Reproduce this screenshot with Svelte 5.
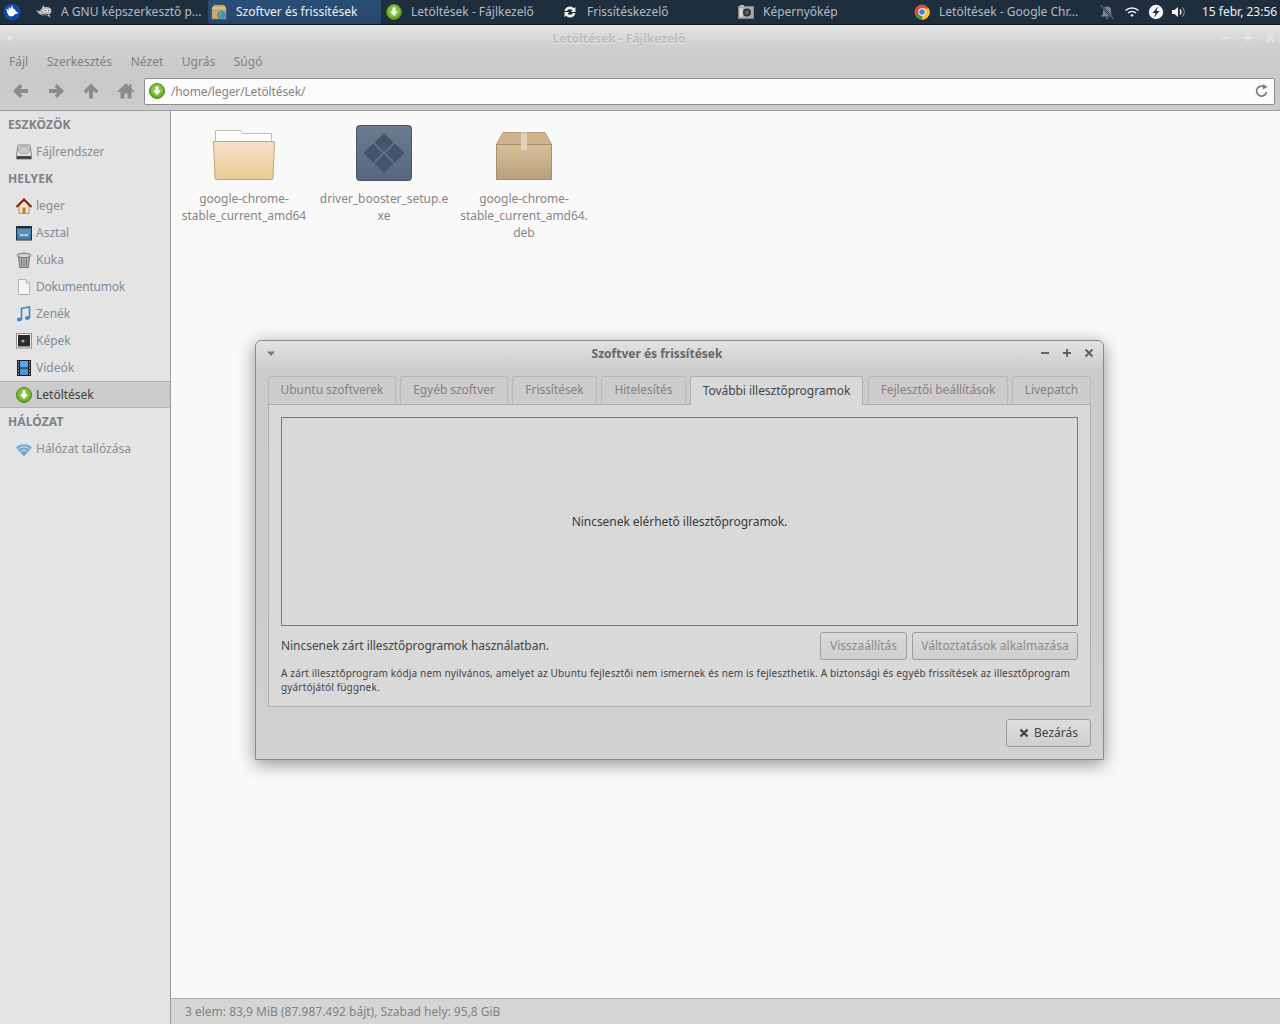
<script>
  const places = [
    { label: 'leger', icon: 'home' },
    { label: 'Asztal', icon: 'desktop' },
    { label: 'Kuka', icon: 'trash' },
    { label: 'Dokumentumok', icon: 'doc', tight: true },
    { label: 'Zenék', icon: 'music' },
    { label: 'Képek', icon: 'pic' },
    { label: 'Videók', icon: 'video' },
    { label: 'Letöltések', icon: 'down', selected: true }
  ];
  const tabs = [
    { label: 'Ubuntu szoftverek', w: 128 },
    { label: 'Egyéb szoftver', w: 108 },
    { label: 'Frissítések', w: 85 },
    { label: 'Hitelesítés', w: 85 },
    { label: 'További illesztőprogramok', w: 173, on: true },
    { label: 'Fejlesztői beállítások', w: 140 },
    { label: 'Livepatch', w: 79 }
  ];
  const menus = ['Fájl', 'Szerkesztés', 'Nézet', 'Ugrás', 'Súgó'];
</script>

{#snippet down()}
  <svg class="i16" viewBox="0 0 16 16">
    <circle cx="8" cy="8" r="7.5" fill="#6aa82c" stroke="#4f8a1c" />
    <circle cx="8" cy="7" r="6" fill="#84c23c" />
    <path d="M6.4 3.5h3.2v4h2.4L8 12 4 7.5h2.4z" fill="#fff" />
  </svg>
{/snippet}

{#snippet sideIcon(kind)}
  <svg class="i16" viewBox="0 0 16 16">
    {#if kind === 'disk'}
      <path d="M2 1h12l1.500 9.500v4.500H.5v-4.500z" fill="#dcdcdc" stroke="#8a8a8a" />
      <ellipse cx="8" cy="6" rx="5.500" ry="3.600" fill="#c8c8c8" stroke="#a4a4a4" />
      <rect x="1" y="12" width="14" height="3" fill="#4a4a4a" />
    {:else if kind === 'home'}
      <path d="M3 8v7.500h10V8L8 3z" fill="#f3e3c3" stroke="#b89a6a" />
      <rect x="6.500" y="9.500" width="3" height="6" fill="#c9772a" />
      <path d="M.5 9 8 1.500 15.500 9" fill="none" stroke="#7a2a20" stroke-width="2" />
    {:else if kind === 'desktop'}
      <rect x="0" y="1" width="16" height="14.500" fill="#1f2c3a" />
      <rect x="1" y="3.500" width="14" height="11" fill="#5d8fb8" />
      <rect x="1" y="9" width="14" height="5.500" fill="#3f79a6" />
      <rect x="3.500" y="9" width="9" height="2.400" fill="#a4c3da" />
    {:else if kind === 'trash'}
      <path d="M2.500 4.500 3.800 15.500h8.400l1.300-11z" fill="#b8b8b8" stroke="#6e6e6e" />
      <path d="M5.500 6.500l.3 7.500M8 6.500v7.500M10.500 6.500l-.3 7.500" stroke="#6e6e6e" />
      <ellipse cx="8" cy="3.400" rx="6.800" ry="2.200" fill="#d6d6d6" stroke="#6e6e6e" />
    {:else if kind === 'doc'}
      <path d="M2.500.5h7.500l3.500 3.500v11.500h-11z" fill="#f5f5f5" stroke="#b5b5b5" />
      <path d="M10 .5v3.500h3.500" fill="#ddd" stroke="#b5b5b5" />
    {:else if kind === 'music'}
      <path d="M5.500 13.500V2.500l8-1.500v11" fill="none" stroke="#3f86c6" stroke-width="1.600" />
      <ellipse cx="3.400" cy="13.500" rx="2.400" ry="2" fill="#3f86c6" />
      <ellipse cx="11.400" cy="12" rx="2.400" ry="2" fill="#3f86c6" />
    {:else if kind === 'pic'}
      <rect x=".5" y=".5" width="15" height="14.500" fill="#f0f0f0" stroke="#8f8f8f" />
      <rect x="2" y="2" width="12" height="11.500" fill="#2b2b2b" />
      <circle cx="7" cy="8" r="1.600" fill="#a5a5a5" />
    {:else if kind === 'video'}
      <rect x="1" y="0" width="14" height="16" fill="#1c1c1c" />
      <rect x="4" y="1" width="8" height="6.500" fill="#5aa6ea" />
      <rect x="4" y="8.500" width="8" height="6.500" fill="#4a94dc" />
      <path d="M2 2h1M2 5h1M2 8h1M2 11h1M2 14h1M13 2h1M13 5h1M13 8h1M13 11h1M13 14h1" stroke="#fff" />
    {:else if kind === 'wifi'}
      <path d="M0 6.500a11.500 11.500 0 0 1 16 0L8 15.500z" fill="#6aa9d8" />
      <path d="M2.500 8a8 8 0 0 1 11 0M4.800 10.300a4.700 4.700 0 0 1 6.400 0" fill="none" stroke="#e4e4e4" stroke-width="1" />
    {/if}
  </svg>
{/snippet}

<div class="screen">
  <header class="panel">
    <div class="whisker">
      <svg class="i20" viewBox="0 0 20 20">
        <circle cx="10" cy="10" r="8.500" fill="#0f4ca8" />
        <path d="M4.500 6.500l2 1.500.5-3.500 1.500 2.500 1.500-4 1 3.500c1.500.2 2.500 1.500 3 3l2 1c-.5 1.500-2 1.500-3 1.500-.8 1.800-3 2.800-5 2.200C6 13.600 4.800 10 4.500 6.500z" fill="#fff" />
      </svg>
    </div>
    <div class="task first">
      <svg class="i16" viewBox="0 0 16 16">
        <path d="M0 6.500l3.500.5L6 4l1-3 1.500 2h3.500l3 1.500.500 3.500-2 2.500 1 3.500-3-2.500-3.500.5L3 10z" fill="#b4b4b4" />
        <circle cx="9" cy="6.500" r="1.800" fill="#fff" /><circle cx="12.500" cy="6.500" r="1.500" fill="#fff" />
        <circle cx="9" cy="6.500" r=".8" fill="#222" /><circle cx="12.500" cy="6.500" r=".7" fill="#222" />
        <path d="M6 10h7l-2 2H7z" fill="#555" />
      </svg>
      <span>A GNU képszerkesztő p...</span>
    </div>
    <div class="task active">
      <svg class="i16" viewBox="0 0 16 16">
        <path d="M1 4 3 1h10l2 3v11H1z" fill="#c9a878" stroke="#a08355" stroke-width=".5" />
        <path d="M1 4h14" stroke="#e6d3b2" />
        <circle cx="10.500" cy="11" r="4.300" fill="#4a86c8" />
        <path d="M8 9l3-1 1 2-2 1 0 3-2-2z" fill="#6ab04a" />
      </svg>
      <span>Szoftver és frissítések</span>
    </div>
    <div class="task">{@render down()}<span>Letöltések - Fájlkezelő</span></div>
    <div class="task">
      <svg class="i16" viewBox="0 0 16 16">
        <path d="M2.500 7A5.600 5.600 0 0 1 12 4.200L13.500 3v5H8.800l1.700-1.800A3.400 3.400 0 0 0 5 7z" fill="#f2f2f2" />
        <path d="M13.500 9A5.600 5.600 0 0 1 4 11.800L2.500 13V8h4.700l-1.700 1.800A3.400 3.400 0 0 0 11 9z" fill="#f2f2f2" />
      </svg>
      <span>Frissítéskezelő</span>
    </div>
    <div class="task">
      <svg class="i16" viewBox="0 0 16 16">
        <rect x=".5" y="2.500" width="15" height="12" fill="#aaa" stroke="#888" />
        <rect x="2" y="1" width="4" height="2" fill="#bbb" />
        <circle cx="9" cy="8.500" r="4" fill="#333" /><circle cx="9" cy="8.500" r="2" fill="#6a5a70" />
        <rect x="1.500" y="4" width="3" height="9" fill="#ddd" />
      </svg>
      <span>Képernyőkép</span>
    </div>
    <div class="task">
      <svg class="i16" viewBox="0 0 16 16">
        <circle cx="8" cy="8" r="7.500" fill="#dd4b3e" />
        <path d="M8 8 1.500 11.800A7.500 7.500 0 0 0 8 15.500z M8 8l-3.500 7A7.500 7.500 0 0 0 14.500 11.800z" fill="#2f9e4f" />
        <path d="M8 4.500h6.900A7.500 7.500 0 0 1 8 15.500z" fill="#fbc02d" />
        <circle cx="8" cy="8" r="3.700" fill="#fff" /><circle cx="8" cy="8" r="2.800" fill="#3f7fe0" />
      </svg>
      <span>Letöltések - Google Chr...</span>
    </div>
    <div class="tray">
      <svg class="i16 bell" viewBox="0 0 16 16">
        <path d="M2 12.500c1.800-1.500 2-3.500 2-6a4 4 0 0 1 8 0c0 2.500.2 4.500 2 6zM6.500 13.500h3L8 15.500z" fill="#7a8793" />
        <path d="M1.500 1l13 14" stroke="#1f2e3d" stroke-width="2" />
        <path d="M1.500 1l13 14" stroke="#7a8793" stroke-width="1" />
      </svg>
      <svg class="i16 wifi" viewBox="0 0 16 16">
        <path d="M1.500 6.500a9.500 9.500 0 0 1 13 0M4 9a6 6 0 0 1 8 0" fill="none" stroke="#f2f2f2" stroke-width="1.500" />
        <path d="M6.200 11a2.800 2.800 0 0 1 3.600 0L8 13z" fill="#f2f2f2" />
      </svg>
      <svg class="i16 bolt" viewBox="0 0 16 16">
        <circle cx="8" cy="8" r="7.200" fill="#f5f5f5" />
        <path d="M10 2.500 4.500 9H7.500L6 13.500 11.500 7H8.500z" fill="#1f2e3d" />
      </svg>
      <svg class="i16 vol" viewBox="0 0 16 16">
        <path d="M1 6h2.500L7 3v10L3.500 10H1z" fill="#f2f2f2" />
        <path d="M9 5.500a4 4 0 0 1 0 5" fill="none" stroke="#f2f2f2" stroke-width="1.300" />
        <path d="M11.500 3.500a7 7 0 0 1 0 9" fill="none" stroke="#8b959e" stroke-width="1.100" />
      </svg>
      <span class="clock">15 febr, 23:56</span>
    </div>
  </header>

  <main class="win">
    <div class="chrome">
      <div class="wtitle">
        <svg class="arrow pale" viewBox="0 0 10 6"><path d="M1 .5h8L5 5z" /></svg>
        <span class="wt-text">Letöltések - Fájlkezelő</span>
        <div class="wbtns pale-btns">
          <svg viewBox="0 0 10 10"><path d="M1 5h8" /></svg>
          <svg viewBox="0 0 10 10"><path d="M1 5h8M5 1v8" /></svg>
          <svg viewBox="0 0 10 10"><path d="M1.500 1.500l7 7M8.500 1.500l-7 7" /></svg>
        </div>
      </div>
      <nav class="menu">
        {#each menus as m}<span>{m}</span>{/each}
      </nav>
      <div class="toolbar">
        <div class="tools">
          <svg viewBox="0 0 18 18"><path d="M1 9l7-7 2.500 2.500L8 7h8v4H8l2.500 2.500L8 16z" /></svg>
          <svg viewBox="0 0 18 18"><path d="M17 9l-7 7-2.500-2.500L10 11H2V7h8L7.500 4.500 10 2z" /></svg>
          <svg viewBox="0 0 18 18"><path d="M9 1.500l7.500 7.500-2.500 2.500-3-3v8H7v-8l-3 3L1.500 9z" /></svg>
          <svg viewBox="0 0 18 18"><path d="M9 1 .5 9.500l1.500 1 1.500-1.500v7.500H7.500V11.500h3v5h4V9l1.500 1.500 1.500-1-3-3V2h-2v2.500z" /></svg>
        </div>
        <div class="path">
          {@render down()}
          <span>/home/leger/Letöltések/</span>
          <svg class="reload" viewBox="0 0 14 14">
            <path d="M11.500 8A5 5 0 1 1 9 2.700" fill="none" stroke="#7d7d7d" stroke-width="1.700" />
            <path d="M8 0l4.500 3L8 5.500z" fill="#7d7d7d" />
          </svg>
        </div>
      </div>
    </div>

    <div class="body">
      <aside class="side">
        <div class="head">Eszközök</div>
        <div class="row">{@render sideIcon('disk')}<span>Fájlrendszer</span></div>
        <div class="head">Helyek</div>
        {#each places as p}
          <div class="row" class:sel={p.selected} class:tight={p.tight}>
            {#if p.icon === 'down'}{@render down()}{:else}{@render sideIcon(p.icon)}{/if}
            <span>{p.label}</span>
          </div>
        {/each}
        <div class="head">Hálózat</div>
        <div class="row">{@render sideIcon('wifi')}<span>Hálózat tallózása</span></div>
      </aside>

      <div class="right">
        <section class="files">
          <div class="file">
            <svg class="big" viewBox="0 0 64 56">
              <defs>
                <linearGradient id="fg" x1="0" y1="0" x2="0" y2="1"><stop offset="0" stop-color="#f5e3c6" /><stop offset="1" stop-color="#ecca97" /></linearGradient>
                <linearGradient id="bg" x1="0" y1="0" x2="0" y2="1"><stop offset="0" stop-color="#d6c09b" /><stop offset="1" stop-color="#b7a17c" /></linearGradient>
                <linearGradient id="eg" x1="0" y1="0" x2="0" y2="1"><stop offset="0" stop-color="#6c7a90" /><stop offset="1" stop-color="#5a687f" /></linearGradient>
              </defs>
              <path d="M3.500 18V5.500h25l2 3h29V18z" fill="#fff" stroke="#bdbdbd" />
              <path d="M1.500 16.500h61l-1.500 36.500a1.500 1.500 0 0 1-1.500 1.500h-55a1.500 1.500 0 0 1-1.500-1.500z" fill="url(#fg)" stroke="#c6a878" />
            </svg>
            <div class="name">google-chrome-<br />stable_current_amd64</div>
          </div>
          <div class="file">
            <svg class="big" viewBox="0 0 64 56">
              <rect x="4.500" y=".5" width="55" height="55" rx="3" fill="url(#eg)" stroke="#485468" />
              <path d="M32 8l9.500 9.500-9.500 9.500-9.500-9.500zM21 18.500l9.500 9.500-9.500 9.500L11.500 28zM43 18.500l9.500 9.500-9.500 9.500-9.500-9.500zM32 29l9.500 9.500-9.500 9.500-9.500-9.500z" fill="#44546a" />
            </svg>
            <div class="name">driver_booster_setup.e<br />xe</div>
          </div>
          <div class="file">
            <svg class="big" viewBox="0 0 64 56">
              <path d="M4.500 19.500 11 7.500h42l6.500 12z" fill="#cdb48e" stroke="#b59a70" />
              <rect x="4.500" y="19.500" width="55" height="35" fill="url(#bg)" stroke="#ab8f63" />
              <rect x="29" y="7.500" width="6" height="18" fill="#e2d2b8" />
            </svg>
            <div class="name">google-chrome-<br />stable_current_amd64.<br />deb</div>
          </div>
        </section>
        <footer class="status">3 elem: 83,9 MiB (87.987.492 bájt), Szabad hely: 95,8 GiB</footer>
      </div>
    </div>
  </main>

  <div class="dialog">
    <div class="dtitle">
      <svg class="arrow" viewBox="0 0 10 6"><path d="M1 .5h8L5 5z" /></svg>
      <span class="dt-text">Szoftver és frissítések</span>
      <div class="wbtns">
        <svg viewBox="0 0 10 10"><path d="M1 5h8" /></svg>
        <svg viewBox="0 0 10 10"><path d="M1 5h8M5 1v8" /></svg>
        <svg viewBox="0 0 10 10"><path d="M1.500 1.500l7 7M8.500 1.500l-7 7" /></svg>
      </div>
    </div>
    <div class="tabs">
      {#each tabs as t}
        <div class="tab" class:on={t.on} style="width: {t.w}px">{t.label}</div>
      {/each}
    </div>
    <div class="page">
      <div class="box">Nincsenek elérhető illesztőprogramok.</div>
      <div class="actions">
        <span class="msg">Nincsenek zárt illesztőprogramok használatban.</span>
        <button class="btn dis b1">Visszaállítás</button>
        <button class="btn dis b2">Változtatások alkalmazása</button>
      </div>
      <p class="note">A zárt illesztőprogram kódja nem nyilvános, amelyet az Ubuntu fejlesztői nem ismernek és nem is fejleszthetik. A biztonsági és egyéb frissítések az illesztőprogram gyártójától függnek.</p>
    </div>
    <div class="dfoot">
      <button class="btn close">
        <svg viewBox="0 0 10 10"><path d="M1.500 1.500l7 7M8.500 1.500l-7 7" /></svg>
        Bezárás
      </button>
    </div>
  </div>
</div>

<style>
  :global(body) {
    margin: 0;
    background: #f9f9f9;
  }
  .screen {
    position: relative;
    width: 1280px;
    height: 1024px;
    overflow: hidden;
    font-family: "Noto Sans", sans-serif;
    font-size: 12px;
    display: flex;
    flex-direction: column;
  }
  .i16 { width: 16px; height: 16px; flex: none; display: block; }
  .i20 { width: 20px; height: 20px; flex: none; display: block; }

  .panel {
    height: 25px;
    flex: none;
    box-sizing: border-box;
    background: #1f2e3d;
    border-bottom: 1px solid #10171e;
    display: flex;
    align-items: center;
    color: #b4bcc3;
  }
  .whisker { width: 33px; flex: none; display: flex; padding-left: 2px; box-sizing: border-box; }
  .task {
    width: 176px;
    flex: none;
    box-sizing: border-box;
    height: 24px;
    padding-left: 3px;
    display: flex;
    align-items: center;
    gap: 9px;
    white-space: nowrap;
  }
  .task span { margin-top: -2px; }
  .task.first { width: 175px; }
  .task.active {
    width: 173px;
    margin-right: 2px;
    background: linear-gradient(#2a4f75, #24466a);
    border-radius: 2px;
    color: #eef2f5;
  }
  .tray {
    flex: 1;
    display: flex;
    align-items: center;
    height: 24px;
    padding-left: 12px;
  }
  .tray .wifi { margin-left: 9px; }
  .tray .bolt { margin-left: 8px; }
  .tray .vol { margin-left: 7px; }
  .clock { margin-left: 15px; margin-top: -2px; color: #eef0f2; white-space: nowrap; }

  .win {
    flex: 1;
    display: flex;
    flex-direction: column;
    min-height: 0;
  }
  .chrome {
    flex: none;
    height: 86px;
    background: linear-gradient(#e6e6e6 0, #d0d0d0 20px, #cbcbcb 40px, #c9c9c9 60px, #cdcdcd 100%);
    border-bottom: 1px solid #9c9c9c;
    box-sizing: border-box;
  }
  .wtitle {
    height: 26px;
    position: relative;
    display: flex;
    align-items: center;
    justify-content: center;
  }
  .wt-text {
    font-weight: 700;
    color: #bdbdbd;
    text-shadow: 0 1px 0 #e9e9e9;
    margin-left: -42px;
  }
  .arrow {
    position: absolute;
    left: 10px;
    top: 10px;
    width: 10px;
    height: 6px;
    fill: #777;
  }
  .arrow.pale { fill: #e8e8e8; left: 5px; top: 11px; }
  .wbtns {
    position: absolute;
    right: 9px;
    top: 7px;
    display: flex;
    gap: 12px;
  }
  .wbtns svg {
    width: 10px;
    height: 10px;
    fill: none;
    stroke: #5d5d5d;
    stroke-width: 1.800;
    display: block;
  }
  .pale-btns svg { stroke: #e6e6e6; }
  .pale-btns { right: 5px; top: 8px; }
  .menu {
    height: 21px;
    display: flex;
    align-items: center;
    gap: 18.600px;
    padding-left: 9px;
    color: #857f7f;
  }
  .toolbar {
    height: 38px;
    display: flex;
    align-items: center;
  }
  .tools {
    display: flex;
    gap: 17px;
    padding-left: 12px;
    width: 144px;
    box-sizing: border-box;
    flex: none;
  }
  .tools svg { width: 18px; height: 18px; fill: #8b8b8b; display: block; }
  .path {
    width: 1131px;
    height: 27px;
    box-sizing: border-box;
    background: #fbfbfb;
    border: 1px solid #8d8d8d;
    border-radius: 2px;
    display: flex;
    align-items: center;
    padding: 0 5px 0 4px;
    gap: 6px;
    color: #858585;
  }
  .path span { flex: 1; letter-spacing: -.13px; }
  .reload { width: 14px; height: 14px; }

  .body { flex: 1; display: flex; min-height: 0; }
  .side {
    width: 171px;
    flex: none;
    box-sizing: border-box;
    background: #e4e4e4;
    border-right: 1px solid #9a9a9a;
    color: #828d96;
  }
  .head {
    height: 27px;
    line-height: 27px;
    padding-left: 8px;
    font-weight: 700;
    text-transform: uppercase;
    color: #7d8287;
    letter-spacing: .12px;
  }
  .row {
    height: 27px;
    display: flex;
    align-items: center;
    padding-left: 16px;
    gap: 4px;
    box-sizing: border-box;
  }
  .row.tight span { letter-spacing: -.25px; }
  .row.sel {
    background: #cccccc;
    border-top: 1px solid #b4b4b4;
    border-bottom: 1px solid #b4b4b4;
    color: #3f3f3f;
  }
  .right { flex: 1; display: flex; flex-direction: column; min-width: 0; }
  .files {
    flex: 1;
    background: #f9f9f9;
    display: flex;
    padding: 14px 0 0 3px;
    align-items: flex-start;
  }
  .file { width: 140px; display: flex; flex-direction: column; align-items: center; }
  .big { width: 64px; height: 56px; display: block; }
  .name {
    margin-top: 9px;
    text-align: center;
    line-height: 17px;
    color: #8a8585;
    white-space: nowrap;
    letter-spacing: -.04px;
  }
  .status {
    height: 26px;
    flex: none;
    box-sizing: border-box;
    background: #d5d5d5;
    border-top: 1px solid #a8a8a8;
    padding-left: 14px;
    line-height: 25px;
    color: #828282;
  }

  .dialog {
    position: absolute;
    left: 255px;
    top: 340px;
    width: 849px;
    height: 420px;
    box-sizing: border-box;
    border: 1px solid #8a8a8a;
    border-radius: 6px 6px 0 0;
    background: linear-gradient(#e2e2e2 0, #cbcbcb 30px, #cccccc 60%, #d2d2d2 100%);
    box-shadow: 0 4px 18px rgba(0, 0, 0, .42);
    display: flex;
    flex-direction: column;
    color: #3f3f3f;
  }
  .dtitle {
    height: 25px;
    flex: none;
    position: relative;
    display: flex;
    align-items: center;
    justify-content: center;
  }
  .dt-text {
    font-weight: 700;
    color: #666;
    margin-left: -45px;
  }
  .tabs {
    display: flex;
    gap: 4px;
    margin: 10px 12px 0 12px;
    height: 28px;
    flex: none;
    position: relative;
    z-index: 1;
  }
  .tab {
    box-sizing: border-box;
    flex: none;
    border: 1px solid #b8b8b8;
    border-bottom: 0;
    border-radius: 3px 3px 0 0;
    line-height: 26px;
    text-align: center;
    color: #868181;
    white-space: nowrap;
    background: #cdcdcd;
    letter-spacing: -.05px;
  }
  .tab.on {
    color: #3f4650;
    background: #d9d9d9;
    height: 29px;
    line-height: 28px;
    border-color: #b0b0b0;
    margin-right: 1px;
  }
  .page {
    margin: 0 12px;
    height: 303px;
    flex: none;
    box-sizing: border-box;
    background: #d9d9d9;
    border: 1px solid #b0b0b0;
    padding: 12px;
    display: flex;
    flex-direction: column;
  }
  .box {
    height: 209px;
    flex: none;
    box-sizing: border-box;
    border: 1px solid #7a7a7a;
    display: flex;
    align-items: center;
    justify-content: center;
    color: #3a3a3a;
    letter-spacing: -.05px;
  }
  .actions {
    margin-top: 6px;
    display: flex;
    align-items: center;
    gap: 5px;
    height: 28px;
    flex: none;
  }
  .msg { flex: 1; color: #444; letter-spacing: -.05px; margin-top: -2px; }
  .btn {
    font: inherit;
    height: 28px;
    box-sizing: border-box;
    border: 1px solid #9c9c9c;
    border-radius: 3px;
    padding: 0 0 2px;
    background: linear-gradient(#d9d9d9, #cfcfcf);
  }
  .b1 { width: 87px; }
  .b2 { width: 166px; }
  .btn.dis { color: #8e8a8a; }
  .note {
    margin: 6px 0 0;
    font-size: 10px;
    line-height: 14px;
    letter-spacing: .165px;
    color: #444;
  }
  .dfoot {
    flex: 1;
    display: flex;
    justify-content: flex-end;
    align-items: flex-start;
    padding: 12px 12px 0 0;
  }
  .close {
    width: 85px;
    color: #444;
    display: flex;
    align-items: center;
    justify-content: center;
    gap: 5px;
    background: linear-gradient(#dedede, #d0d0d0);
  }
  .close svg { width: 10px; height: 10px; fill: none; stroke: #444; stroke-width: 2.400; margin-top: 2px; }
</style>
